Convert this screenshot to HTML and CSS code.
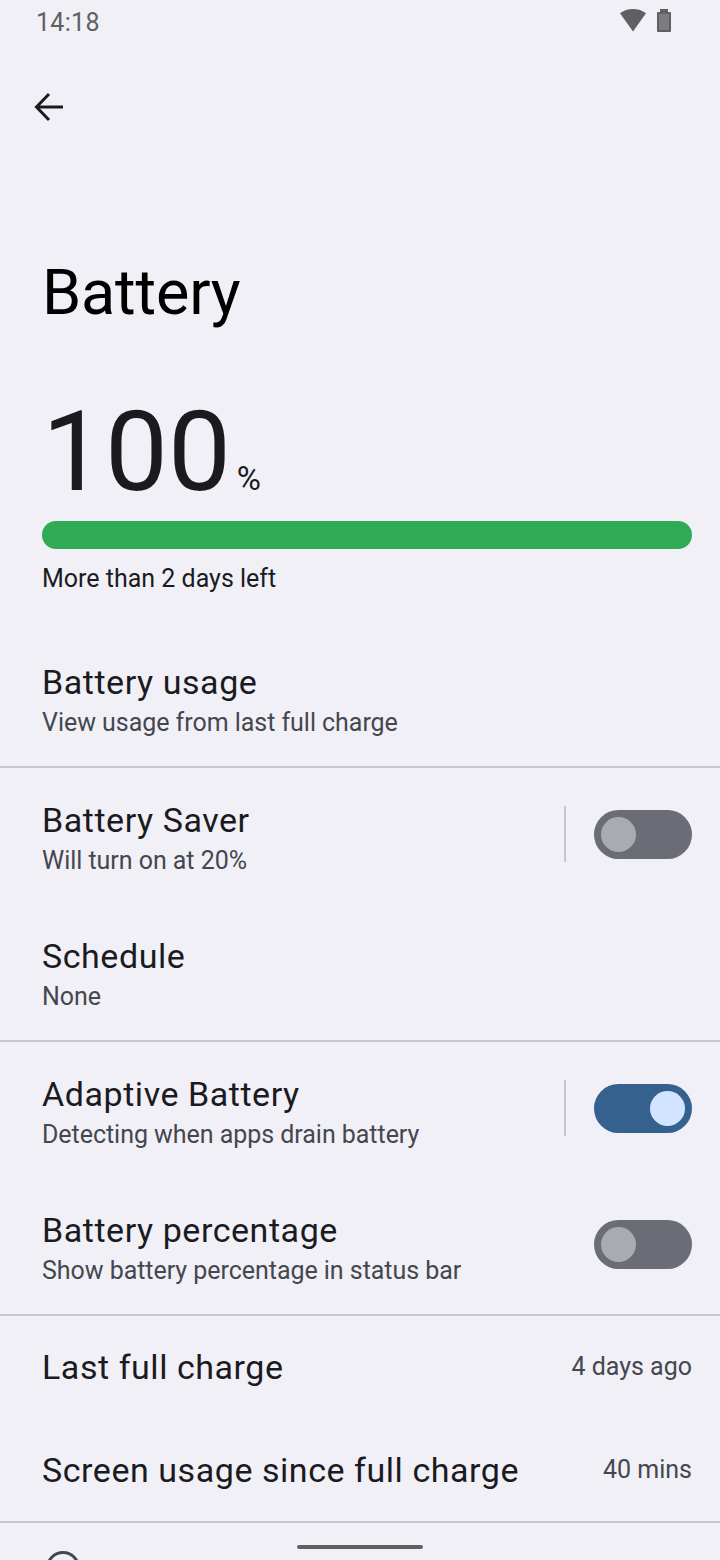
FILE: index.html
```html
<!DOCTYPE html>
<html lang="en">

<head>
  <meta charset="UTF-8">
  <title>Battery</title>
  <link rel="stylesheet" href="styles.css">
</head>

<body>
  <div class="screen">
    <div class="status-bar">
      <span class="clock">14:18</span>
      <div class="status-icons">
        <svg width="26" height="24" viewBox="0 0 26 24">
          <path d="M13 22.500 0 4.200C3.600 1.500 8 0 13 0s9.400 1.500 13 4.200z" fill="#5f6063" />
        </svg>
        <svg width="16" height="24" viewBox="0 0 16 24">
          <path d="M4 0h8v3h2a1 1 0 0 1 1 1v18a1 1 0 0 1-1 1H2a1 1 0 0 1-1-1V4a1 1 0 0 1 1-1h2z" fill="#5f6063" />
          <rect x="3" y="5" width="10" height="16" fill="#7c7d80" />
        </svg>
      </div>
    </div>

    <div class="back">
      <svg width="32" height="32" viewBox="0 0 32 32">
        <path d="M30 16H4M16 3 3.500 16 16 29" fill="none" stroke="#1b1b1f" stroke-width="3" />
      </svg>
    </div>

    <h1 class="title">Battery</h1>

    <div class="level">
      <span class="level-num">100</span>
      <span class="level-unit">%</span>
    </div>
    <div class="meter"></div>
    <div class="meter-label">More than 2 days left</div>

    <div class="row">
      <div class="row-text">
        <div class="row-title">Battery usage</div>
        <div class="row-sub">View usage from last full charge</div>
      </div>
    </div>
    <div class="divider"></div>

    <div class="row">
      <div class="row-text">
        <div class="row-title">Battery Saver</div>
        <div class="row-sub">Will turn on at 20%</div>
      </div>
      <div class="vline"></div>
      <div class="switch"><div class="knob"></div></div>
    </div>
    <div class="row">
      <div class="row-text">
        <div class="row-title">Schedule</div>
        <div class="row-sub">None</div>
      </div>
    </div>
    <div class="divider"></div>

    <div class="row">
      <div class="row-text">
        <div class="row-title">Adaptive Battery</div>
        <div class="row-sub">Detecting when apps drain battery</div>
      </div>
      <div class="vline"></div>
      <div class="switch on"><div class="knob"></div></div>
    </div>
    <div class="row">
      <div class="row-text">
        <div class="row-title">Battery percentage</div>
        <div class="row-sub">Show battery percentage in status bar</div>
      </div>
      <div class="switch"><div class="knob"></div></div>
    </div>
    <div class="divider"></div>

    <div class="row short">
      <div class="row-title">Last full charge</div>
      <div class="row-value">4 days ago</div>
    </div>
    <div class="row short">
      <div class="row-title">Screen usage since full charge</div>
      <div class="row-value">40 mins</div>
    </div>
    <div class="divider"></div>

    <div class="info-icon"></div>
    <div class="gesture-bar"></div>
  </div>
</body>

</html>
```

FILE: styles.css
```css
html,
body {
  margin: 0;
  padding: 0;
}

body {
  background-color: #f1f0f7;
  font-family: Roboto, sans-serif;
  color: #1b1b1f;
}

.screen {
  position: relative;
  width: 720px;
  height: 1560px;
  overflow: hidden;
}

.status-bar {
  display: flex;
  justify-content: space-between;
  align-items: center;
  height: 44px;
  padding: 0 48px 0 36px;
}

.clock {
  font-size: 25px;
  letter-spacing: 0.3px;
  color: #5f6063;
}

.status-icons {
  display: flex;
  gap: 10px;
  align-items: flex-start;
  margin-bottom: 2px;
}

.back {
  display: flex;
  margin: 47px 0 0 33px;
  height: 32px;
}

.title {
  margin: 134px 0 0 42px;
  font-size: 63px;
  line-height: 72px;
  font-weight: 400;
  letter-spacing: -0.2px;
  color: #000;
}

.level {
  display: flex;
  align-items: baseline;
  gap: 6px;
  margin: 68px 0 14px 42px;
  height: 110px;
}

.level-num {
  font-size: 112px;
  line-height: 110px;
}

.level-unit {
  font-size: 33px;
}

.meter {
  height: 28px;
  margin: 0 28px 0 42px;
  border-radius: 14px;
  background-color: #2fab55;
}

.meter-label {
  margin: 15px 0 36px 42px;
  font-size: 25px;
  line-height: 30px;
}

.row {
  display: flex;
  align-items: center;
  height: 136px;
  padding: 0 28px 0 42px;
  box-sizing: border-box;
}

.row.short {
  justify-content: space-between;
  height: 102.5px;
}

.row-text {
  flex: 1;
  padding-top: 5px;
}

.row-title {
  font-size: 34px;
  line-height: 40px;
  letter-spacing: 0.55px;
}

.row-sub {
  font-size: 25px;
  line-height: 34px;
  margin-top: 4px;
  letter-spacing: -0.04px;
  color: #44474e;
}

.row-value {
  font-size: 25px;
  margin-bottom: 1px;
  color: #44474e;
}

.divider {
  height: 2px;
  background-color: #c6c6cc;
}

.vline {
  width: 2px;
  height: 56px;
  margin: 0 28px 5px 0;
  background-color: #c6c6cc;
}

.switch {
  display: flex;
  align-items: center;
  width: 98px;
  height: 49px;
  margin-bottom: 3px;
  padding: 0 7px;
  box-sizing: border-box;
  border-radius: 25px;
  background-color: #6a6d75;
}

.knob {
  width: 35px;
  height: 35px;
  border-radius: 50%;
  background-color: #a9abb2;
}

.switch.on {
  justify-content: flex-end;
  background-color: #35618f;
}

.switch.on .knob {
  background-color: #d2e4ff;
}

.info-icon {
  position: absolute;
  left: 46px;
  top: 1551px;
  width: 28px;
  height: 28px;
  border: 3px solid #44474e;
  border-radius: 50%;
}

.gesture-bar {
  position: absolute;
  left: 297px;
  top: 1545px;
  width: 126px;
  height: 4px;
  border-radius: 2px;
  background-color: #5f6063;
}
```
